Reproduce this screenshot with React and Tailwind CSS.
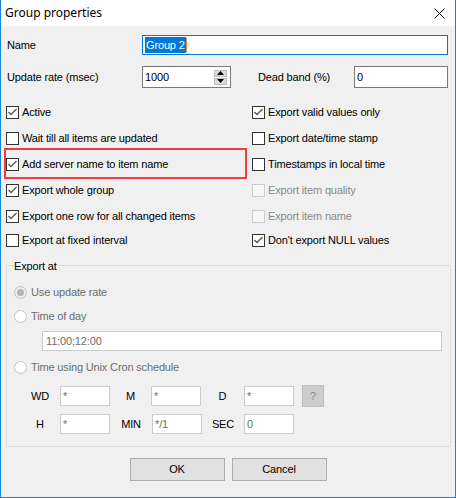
import React from "react";

const font = { fontFamily: '"Liberation Sans", Arial, sans-serif' };

const Check = ({ checked, disabled, label }) => (
  <div className="flex items-center h-full">
    <span
      className={`w-[13px] h-[13px] border flex items-center justify-center shrink-0 ${
        disabled ? "border-[#cccccc] bg-[#f7f7f7]" : "border-[#333333] bg-white"
      }`}
    >
      {checked && (
        <svg width="11" height="11" viewBox="0 0 11 11">
          <path d="M1.5 5 L4 7.5 L9.5 2" stroke="#5a5a5a" strokeWidth="1.4" fill="none" />
        </svg>
      )}
    </span>
    <span className={`ml-[3px] ${disabled ? "text-[#8a8a8a]" : "text-black"}`}>{label}</span>
  </div>
);

const Radio = ({ checked, label }) => (
  <div className="flex items-center h-[16px]">
    <span
      className={`w-[13px] h-[13px] rounded-full border border-[#c4c4c4] flex items-center justify-center ${
        checked ? "bg-[#ececec]" : "bg-white"
      }`}
    >
      {checked && <span className="w-[7px] h-[7px] rounded-full bg-[#b4b4b4]" />}
    </span>
    <span className="ml-[4px] text-[#6d6d6d]">{label}</span>
  </div>
);

const SmallInput = ({ value }) => (
  <div className="w-[50px] h-[20px] bg-white border border-[#cccccc] flex items-center pl-[2px] text-[#6d6d6d]">
    {value}
  </div>
);

const rows = [
  [
    { label: "Active", checked: true },
    { label: "Export valid values only", checked: true },
  ],
  [
    { label: "Wait till all items are updated" },
    { label: "Export date/time stamp" },
  ],
  [
    { label: "Add server name to item name", checked: true },
    { label: "Timestamps in local time" },
  ],
  [
    { label: "Export whole group", checked: true },
    { label: "Export item quality", disabled: true },
  ],
  [
    { label: "Export one row for all changed items", checked: true },
    { label: "Export item name", disabled: true },
  ],
  [
    { label: "Export at fixed interval" },
    { label: "Don't export NULL values", checked: true },
  ],
];

export default function App() {
  return (
    <div
      className="relative w-[456px] h-[498px] bg-[#f0f0f0] border-x border-b border-[#1883d7] flex flex-col text-[11px] tracking-[-0.15px] text-black"
      style={font}
    >
      {/* Title bar */}
      <div className="h-[26px] bg-white flex items-center justify-between pl-[4px] pr-[10px]">
        <span className="text-[12px] tracking-normal" style={{ fontFamily: '"Noto Sans", sans-serif' }}>
          Group properties
        </span>
        <svg width="11" height="11" viewBox="0 0 11 11">
          <path d="M0.5 0.5 L10.5 10.5 M10.5 0.5 L0.5 10.5" stroke="#000" strokeWidth="1" />
        </svg>
      </div>

      {/* Name */}
      <div className="mt-[9px] h-[20px] flex items-center pl-[6px] pr-[7px]">
        <span className="w-[135px]">Name</span>
        <div className="flex-1 h-[20px] border border-[#0078d7] bg-white flex items-center pl-[2px]">
          <span className="bg-[#0078d7] text-white leading-[16px] px-[1px]">Group 2</span>
          <span className="w-[1px] h-[14px] bg-[#e08a3c]" />
        </div>
      </div>

      {/* Update rate / dead band */}
      <div className="mt-[11px] h-[22px] flex items-center pl-[6px] pr-[7px]">
        <span className="w-[135px]">Update rate (msec)</span>
        <div className="w-[89px] h-[22px] border border-[#7a7a7a] bg-white flex items-center justify-between pl-[2px] pr-[3px]">
          <span>1000</span>
          <div className="flex flex-col gap-[1px]">
            <div className="w-[13px] h-[7px] bg-[#dcdcdc] border border-[#bcbcbc] flex items-center justify-center">
              <svg width="7" height="4" viewBox="0 0 7 4">
                <path d="M3.5 0 L7 4 L0 4 Z" fill="#000" />
              </svg>
            </div>
            <div className="w-[13px] h-[7px] bg-[#dcdcdc] border border-[#bcbcbc] flex items-center justify-center">
              <svg width="7" height="4" viewBox="0 0 7 4">
                <path d="M0 0 L7 0 L3.5 4 Z" fill="#000" />
              </svg>
            </div>
          </div>
        </div>
        <span className="ml-[27px] w-[96px]">Dead band (%)</span>
        <div className="flex-1 h-[22px] border border-[#7a7a7a] bg-white flex items-center pl-[2px]">0</div>
      </div>

      {/* Checkboxes */}
      <div className="mt-[11px] flex flex-col pl-[5px]">
        {rows.map(([l, r], i) => (
          <div key={i} className={`flex ${i === 5 ? "h-[22px]" : "h-[26px]"}`}>
            <div className="w-[246px]">
              <Check {...l} />
            </div>
            <div className="flex-1">
              <Check {...r} />
            </div>
          </div>
        ))}
      </div>

      {/* Export at group */}
      <div className="relative mt-[14px] ml-[5px] mr-[4px] h-[182px] border border-[#dcdcdc] pl-[7px] pr-[8px] pt-[18px]">
        <span className="absolute -top-[8px] left-[6px] bg-[#f0f0f0] px-[1px]">Export at</span>
        <Radio checked label="Use update rate" />
        <div className="mt-[8px]">
          <Radio label="Time of day" />
        </div>
        <div className="mt-[7px] ml-[28px] h-[20px] bg-white border border-[#cccccc] flex items-center pl-[3px] text-[#6d6d6d]">
          11:00;12:00
        </div>
        <div className="mt-[8px]">
          <Radio label="Time using Unix Cron schedule" />
        </div>
        <div className="mt-[10px] h-[22px] flex items-center pl-[6px]">
          <span className="w-[40px] text-center">WD</span>
          <SmallInput value="*" />
          <span className="w-[41px] text-center">M</span>
          <SmallInput value="*" />
          <span className="w-[43px] text-center">D</span>
          <SmallInput value="*" />
          <div className="ml-[8px] w-[22px] h-[22px] bg-[#cccccc] border border-[#bfbfbf] flex items-center justify-center text-[#8a8a8a]">
            ?
          </div>
        </div>
        <div className="mt-[7px] h-[20px] flex items-center pl-[6px]">
          <span className="w-[40px] text-center">H</span>
          <SmallInput value="*" />
          <span className="w-[42px] text-center">MIN</span>
          <SmallInput value="*/1" />
          <span className="w-[42px] text-center">SEC</span>
          <SmallInput value="0" />
        </div>
      </div>

      {/* Buttons */}
      <div className="mt-[11px] flex justify-center gap-[7px]">
        <button className="w-[95px] h-[23px] bg-[#e1e1e1] border border-[#adadad] text-[11px]">OK</button>
        <button className="w-[95px] h-[23px] bg-[#e1e1e1] border border-[#adadad] text-[11px]">Cancel</button>
      </div>

      {/* Red annotation */}
      <div className="absolute left-[3px] top-[148px] w-[243px] h-[31px] border-2 border-[#f03c3c]" />
    </div>
  );
}
